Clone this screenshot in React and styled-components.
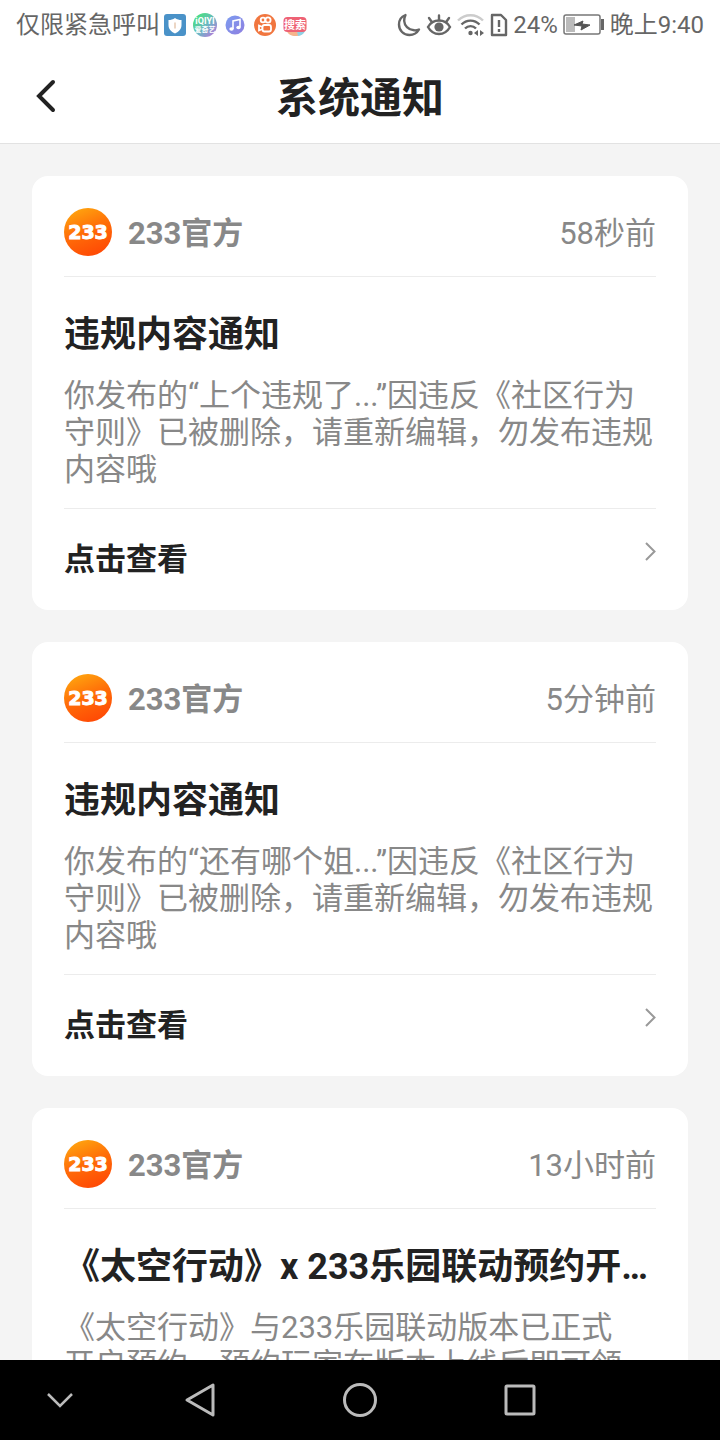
import React from 'react'
import styled, { createGlobalStyle } from 'styled-components'

const GlobalStyle = createGlobalStyle`
    * {
        box-sizing: border-box;
        margin: 0;
        padding: 0;
    }
    body {
        font-family: Roboto, "Noto Sans CJK SC", sans-serif;
        background: #f4f4f4;
        color: #222;
    }
    button {
        font: inherit;
        color: inherit;
        border: 0;
        background: none;
    }
    svg {
        display: block;
        flex-shrink: 0;
    }
`;

const Screen = styled.div`
    height: 100vh;
    display: flex;
    flex-direction: column;
`;

const StatusBar = styled.div`
    height: 50px;
    padding: 0 16px;
    display: flex;
    justify-content: space-between;
    align-items: center;
    background: #fff;
    color: #666;
    font-size: 24px;
    line-height: 50px;
    white-space: nowrap;
`;

const StatusGroup = styled.div`
    display: flex;
    align-items: center;
    gap: ${props => props.$gap || 0}px;
`;

const Header = styled.header`
    height: 94px;
    padding: 0 32px;
    display: grid;
    grid-template-columns: 1fr auto 1fr;
    align-items: center;
    background: #fff;
    border-bottom: 1px solid #e2e2e2;
    & > button {
        width: 32px;
        height: 48px;
    }
    & > h1 {
        padding-top: 4px;
        font-size: 42px;
        line-height: 60px;
        font-weight: 700;
    }
`;

const List = styled.main`
    flex: 1;
    min-height: 0;
    overflow: hidden;
    padding: 32px;
    display: flex;
    flex-direction: column;
    gap: 32px;
`;

const Card = styled.article`
    flex-shrink: 0;
    padding: 0 32px;
    background: #fff;
    border-radius: 16px;
`;

const CardTop = styled.div`
    padding: 32px 0 16px;
    display: flex;
    align-items: flex-start;
    gap: 16px;
    border-bottom: 1px solid #ececec;
    color: #888;
    font-size: 31px;
    line-height: 52px;
    & > strong {
        flex: 1;
        font-weight: 700;
    }
`;

const CardBody = styled.div`
    padding: 34px 0 20px;
    border-bottom: 1px solid #ececec;
    & > h2 {
        font-size: 36px;
        line-height: 48px;
        font-weight: 700;
        white-space: nowrap;
        overflow: hidden;
        text-overflow: ellipsis;
    }
    & > p {
        margin-top: 18px;
        color: #888;
        font-size: 31px;
        line-height: 37px;
        white-space: pre-line;
    }
`;

const CardLink = styled.button`
    width: 100%;
    padding: 30px 0;
    display: flex;
    justify-content: space-between;
    align-items: flex-start;
    & > span {
        font-size: 31px;
        line-height: 41px;
        font-weight: 700;
    }
`;

const NavBar = styled.nav`
    height: 80px;
    display: grid;
    grid-template-columns: 3fr 4fr 4fr 4fr 3fr;
    background: #000;
    & > button {
        display: flex;
        align-items: center;
        justify-content: center;
    }
`;

const notices = [
    {
        id: 1,
        time: '58秒前',
        title: '违规内容通知',
        text: '你发布的“上个违规了...”因违反《社区行为守则》已被删除，请重新编辑，勿发布违规内容哦',
    },
    {
        id: 2,
        time: '5分钟前',
        title: '违规内容通知',
        text: '你发布的“还有哪个姐...”因违反《社区行为守则》已被删除，请重新编辑，勿发布违规内容哦',
    },
    {
        id: 3,
        time: '13小时前',
        title: '《太空行动》x 233乐园联动预约开启',
        text: '《太空行动》与233乐园联动版本已正式\n开启预约，预约玩家在版本上线后即可领',
    },
]

const AppIcons = () => {
    return (
        <svg width="150" height="30" viewBox="0 0 150 30" aria-hidden="true">
            <defs>
                <linearGradient id="video" x1="0" y1="0" x2="1" y2="1">
                    <stop offset="0.2" stopColor="#4fd98a" />
                    <stop offset="0.55" stopColor="#6bb5c4" />
                    <stop offset="1" stopColor="#c86be0" />
                </linearGradient>
                <linearGradient id="music" x1="0" y1="0" x2="1" y2="1">
                    <stop offset="0" stopColor="#7b9cf0" />
                    <stop offset="1" stopColor="#8f7fe0" />
                </linearGradient>
            </defs>
            <rect x="4" y="4" width="22" height="22" rx="3" fill="#4a92c8" />
            <path d="M15 8c2 1.500 4 2 6.500 2v5c0 4-2.500 6.500-6.500 8.500-4-2-6.500-4.500-6.500-8.500v-5c2.500 0 4.500-.5 6.500-2z" fill="#fff" />
            <path d="M15 12.500v6" stroke="#ecd6c4" strokeWidth="2" />
            <circle cx="45" cy="15" r="12" fill="url(#video)" />
            <text x="45" y="14" fontSize="9" fontWeight="700" fill="#fff" textAnchor="middle">iQIYI</text>
            <text x="45" y="22" fontSize="7" fontWeight="700" fill="#fff" textAnchor="middle">爱奇艺</text>
            <circle cx="75" cy="15" r="9.500" fill="url(#music)" />
            <path d="M73 19V11l7-1.500v7.500" fill="none" stroke="#fff" strokeWidth="1.600" />
            <ellipse cx="71.500" cy="19" rx="2.200" ry="1.800" fill="#fff" />
            <ellipse cx="78.500" cy="17.500" rx="2.200" ry="1.800" fill="#fff" />
            <circle cx="105" cy="15" r="11" fill="#f1763f" />
            <g fill="none" stroke="#fff" strokeWidth="1.800">
                <circle cx="103" cy="10" r="2.300" />
                <circle cx="108" cy="10" r="2.600" />
                <rect x="102.500" y="15" width="8.500" height="6.500" rx="2" />
                <path d="M102.500 17l-3.500-1.500v5l3.500-1.500" />
            </g>
            <path d="M127 21h17c-1 3.500-4 5-8.500 5s-7.500-1.500-8.500-5z" fill="#f6b48c" />
            <path d="M137 21h8c-1 3-4 4.800-7 5z" fill="#8fd0e4" />
            <rect x="123.500" y="7" width="23" height="15" rx="4" fill="#ee6275" />
            <text x="135" y="19" fontSize="11" fontWeight="700" fill="#fff" textAnchor="middle">搜索</text>
        </svg>
    )
}

const MoonIcon = () => (
    <svg width="24" height="24" viewBox="0 0 24 24" fill="none" stroke="#666" strokeWidth="2.400" strokeLinejoin="round" aria-hidden="true">
        <path d="M8.500 2C4.500 3.500 2 7 2 11.500 2 17.500 6.500 22 12.500 22c4 0 7.500-2 9.500-5.500-2 .8-3.500 1-5 .8C11 16.800 7.500 12.500 7.200 8 7.100 5.800 7.500 4 8.500 2z" />
    </svg>
)

const EyeIcon = () => (
    <svg width="26" height="24" viewBox="0 0 26 24" fill="none" stroke="#666" strokeWidth="2.400" strokeLinecap="round" aria-hidden="true">
        <path d="M2 14C4.500 9.500 8.500 7.500 13 7.500s8.500 2 11 6.500c-2.500 4.500-6.500 7-11 7s-8.500-2.500-11-7z" />
        <path d="M13 7V2.500M5.500 8.500L3 5M20.500 8.500L23 5" />
        <circle cx="13" cy="14" r="4.600" fill="#666" stroke="none" />
    </svg>
)

const WifiIcon = () => (
    <svg width="28" height="24" viewBox="0 0 28 24" fill="none" stroke="#666" strokeWidth="2.400" aria-hidden="true">
        <path d="M1 7.500C8 .5 19 .5 26 7.500" stroke="#ccc" />
        <path d="M4.500 11.500c5-5.200 13-5.200 18 0" />
        <path d="M8 15.500c3.200-3.200 8-3.200 11 0" />
        <circle cx="13.500" cy="20" r="2.200" fill="#666" stroke="none" />
        <path d="M17 20l4-3v6zM27 20l-4-3v6z" fill="#666" stroke="none" />
    </svg>
)

const SimIcon = () => (
    <svg width="18" height="24" viewBox="0 0 18 24" fill="none" stroke="#666" strokeWidth="2.400" strokeLinejoin="round" aria-hidden="true">
        <path d="M2 2h9l5 5v15H2z" />
        <path d="M9 7v7M9 16v3" />
    </svg>
)

const BatteryIcon = () => (
    <svg width="42" height="24" viewBox="0 0 42 24" aria-hidden="true">
        <rect x="1" y="2" width="36" height="19" rx="2" fill="none" stroke="#777" strokeWidth="1.500" />
        <rect x="3" y="4" width="9" height="15" fill="#bbb" />
        <path d="M11 12l9-4-1 3 8 1-9 5 1-4z" fill="#555" stroke="#555" />
        <rect x="38" y="6" width="3" height="11" fill="#666" />
    </svg>
)

const Logo = () => (
    <svg width="48" height="48" viewBox="0 0 48 48" aria-hidden="true">
        <defs>
            <linearGradient id="logo" x1="0.2" y1="0" x2="0.6" y2="1">
                <stop offset="0" stopColor="#ffa70f" />
                <stop offset="0.5" stopColor="#ff6d08" />
                <stop offset="1" stopColor="#ff4a05" />
            </linearGradient>
        </defs>
        <circle cx="24" cy="24" r="24" fill="url(#logo)" />
        <text x="24" y="31" fontFamily="DejaVu Sans, sans-serif" fontWeight="700" fontSize="19" fill="#fff" stroke="#fff" strokeWidth="1" textAnchor="middle">233</text>
    </svg>
)

const Notice = ({ time, title, text }) => {
    return (
        <Card>
            <CardTop>
                <Logo />
                <strong>233官方</strong>
                <time>{time}</time>
            </CardTop>
            <CardBody>
                <h2>{title}</h2>
                <p>{text}</p>
            </CardBody>
            <CardLink type="button">
                <span>点击查看</span>
                <svg width="12" height="24" viewBox="0 0 12 24" fill="none" stroke="#999" strokeWidth="2" aria-hidden="true">
                    <path d="M2 4l8.500 8.500L2 21" />
                </svg>
            </CardLink>
        </Card>
    )
}

const App = () => {
    return (
        <Screen>
            <GlobalStyle />
            <StatusBar>
                <StatusGroup>
                    <span>仅限紧急呼叫</span>
                    <AppIcons />
                </StatusGroup>
                <StatusGroup $gap={5}>
                    <MoonIcon />
                    <EyeIcon />
                    <WifiIcon />
                    <SimIcon />
                    <span>24%</span>
                    <BatteryIcon />
                    <span>晚上9:40</span>
                </StatusGroup>
            </StatusBar>
            <Header>
                <button type="button" aria-label="返回">
                    <svg width="32" height="48" viewBox="0 0 32 48" fill="none" stroke="#222" strokeWidth="4" strokeLinecap="round" aria-hidden="true">
                        <path d="M21 9L7 23l14 14" />
                    </svg>
                </button>
                <h1>系统通知</h1>
            </Header>
            <List>
                {notices.map(notice => (
                    <Notice key={notice.id} time={notice.time} title={notice.title} text={notice.text} />
                ))}
            </List>
            <NavBar>
                <button type="button" aria-label="收起">
                    <svg width="32" height="40" viewBox="0 0 32 40" fill="none" stroke="#bbb" strokeWidth="2.500" aria-hidden="true">
                        <path d="M4 14l12 12 12-12" />
                    </svg>
                </button>
                <button type="button" aria-label="后退">
                    <svg width="32" height="40" viewBox="0 0 32 40" fill="none" stroke="#bbb" strokeWidth="3" strokeLinejoin="round" aria-hidden="true">
                        <path d="M29 5v30L3 20z" />
                    </svg>
                </button>
                <button type="button" aria-label="主页">
                    <svg width="36" height="40" viewBox="0 0 36 40" fill="none" stroke="#bbb" strokeWidth="3" aria-hidden="true">
                        <circle cx="18" cy="20" r="15.500" />
                    </svg>
                </button>
                <button type="button" aria-label="最近任务">
                    <svg width="32" height="40" viewBox="0 0 32 40" fill="none" stroke="#bbb" strokeWidth="3" aria-hidden="true">
                        <rect x="2" y="6" width="28" height="28" rx="1" />
                    </svg>
                </button>
            </NavBar>
        </Screen>
    )
}

export default App
